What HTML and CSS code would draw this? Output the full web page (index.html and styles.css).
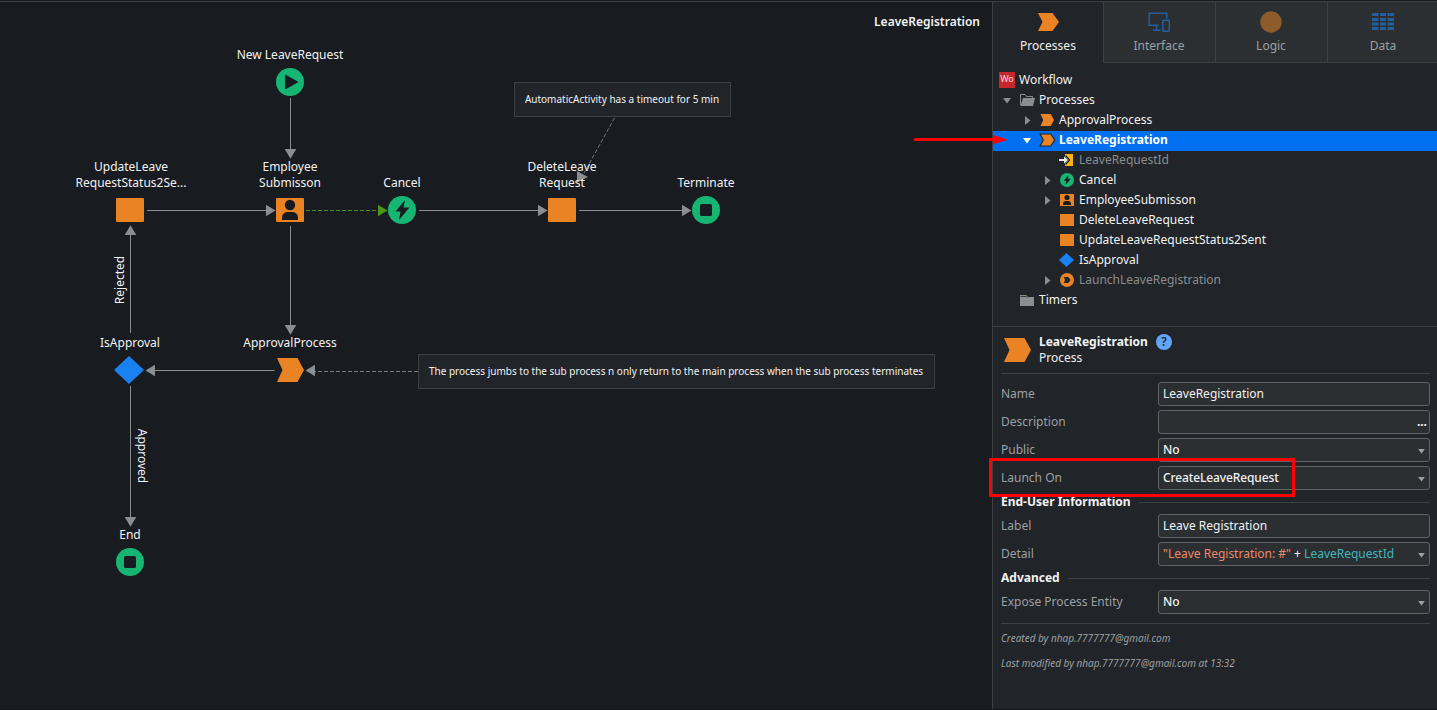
FILE: index.html
```html
<!DOCTYPE html>
<html lang="en">
<head>
<meta charset="utf-8">
<title>LeaveRegistration</title>
<link rel="stylesheet" href="styles.css">
</head>
<body>
<svg class="defs" width="0" height="0">
  <defs>
    <symbol id="start" viewBox="0 0 28 28"><circle cx="14" cy="14" r="14" fill="#16b573"/><path d="M9 7.2Q9 6.500 9.700 6.800L21.700 13.400Q22.600 14 21.700 14.600L9.700 21.200Q9 21.500 9 20.800Z" fill="#181b1f"/></symbol>
    <symbol id="stop" viewBox="0 0 28 28"><circle cx="14" cy="14" r="14" fill="#16b573"/><rect x="8" y="8" width="12" height="12" rx="1.500" fill="#181b1f"/></symbol>
    <symbol id="event" viewBox="0 0 28 28"><circle cx="14" cy="14" r="14" fill="#16b573"/><path d="M17 4L7.500 15.500H12.500L11 24L21.500 11.500H15.500Z" fill="#181b1f"/></symbol>
    <symbol id="auto" viewBox="0 0 28 28"><rect y="2" width="28" height="24" rx="1" fill="#e98324"/></symbol>
    <symbol id="human" viewBox="0 0 28 28"><rect y="2" width="28" height="24" rx="1" fill="#e98324"/><circle cx="14" cy="9" r="5.200" fill="#181b1f"/><path d="M6 24V21.500Q6.500 16 12 16H16Q21.500 16 22 21.500V24Z" fill="#181b1f"/></symbol>
    <symbol id="process" viewBox="0 0 28 28"><path d="M1 2H21.500L28 14L21.500 26H1L6.500 14Z" fill="#e98324"/></symbol>
    <symbol id="decision" viewBox="0 0 30 28"><path d="M15 0L30 14L15 28L0 14Z" fill="#1a82f0"/></symbol>
    <symbol id="launch" viewBox="0 0 28 28"><circle cx="14" cy="14" r="14" fill="#e98324"/><path d="M7.500 8H16.500L21 14L16.500 20H7.500L10 14Z" fill="#212428"/></symbol>
    <symbol id="input" viewBox="0 0 16 16"><path d="M6 2H14V14H6V11L9.500 8L6 5Z" fill="#fdb515"/><path d="M6.500 3.500L10.500 8L6.500 12.500" fill="none" stroke="#212428" stroke-width="1.300"/><path d="M0 7H5V4.500L9 8L5 11.500V9H0Z" fill="#e8eaec"/></symbol>
    <symbol id="folder-open" viewBox="0 0 15 12"><path d="M.5 11V.5H5L6.500 2.500H12.500V4" fill="none" stroke="#8b8d90"/><path d="M3 4H15L13 12H0.500Z" fill="#8b8d90"/></symbol>
    <symbol id="folder" viewBox="0 0 14 12"><path d="M0 1H6L8 3H14V12H0Z" fill="#8b8d90"/><path d="M.5 2.500H6.500L7.500 3.500" fill="none" stroke="#212428" stroke-width=".8"/></symbol>
    <symbol id="right" viewBox="0 0 6 9"><path d="M0 0L5.500 4.500L0 9Z" fill="currentColor"/></symbol>
    <symbol id="down" viewBox="0 0 8 6"><path d="M0 0H8L4 5.500Z" fill="currentColor"/></symbol>
  </defs>
</svg>

<div class="app">
  <main class="canvas">
    <h1 class="canvas-title">LeaveRegistration</h1>

    <div class="note" style="left:514px;top:80px;width:217px">AutomaticActivity has a timeout for 5 min</div>
    <div class="note" style="left:418px;top:352px;width:517px">The process jumbs to the sub process n only return to the main process when the sub process terminates</div>

    <svg class="edges" viewBox="0 2 992 708" width="992" height="708">
      <g stroke="#8b8d90" fill="none">
        <path d="M290.500 98V150M147 210.500H267M419 210.500H539M579 210.500H683M290.500 226V326M274.500 370.500H154M130.500 333V234M130.500 386V518"/>
        <path d="M418 371.500H314M614.500 118L584 173" stroke-dasharray="4 2" stroke="#77797c"/>
        <path d="M306 210.500H379" stroke="#4a9418" stroke-dasharray="4 2"/>
      </g>
      <g fill="#8b8d90">
        <path d="M284.700 149H296.300L290.500 158.700Z"/>
        <path d="M266 204.700V216.300L275.500 210.500Z"/>
        <path d="M538 204.700V216.300L547.500 210.500Z"/>
        <path d="M682 204.700V216.300L691.500 210.500Z"/>
        <path d="M284.700 325H296.300L290.500 334.700Z"/>
        <path d="M155 364.700V376.300L145.500 370.500Z"/>
        <path d="M315 364.700V376.300L305.500 370.500Z"/>
        <path d="M124.700 235H136.300L130.500 225.300Z"/>
        <path d="M124.700 517H136.300L130.500 526.700Z"/>
        <path d="M577 171V182.500L588 177Z"/>
        <path d="M378 204.700V216.300L387.500 210.500Z" fill="#4a9418"/>
      </g>
    </svg>

    <div class="node" style="left:290px;top:80px"><span>New LeaveRequest</span><svg><use href="#start"/></svg></div>
    <div class="node" style="left:130px;top:208px"><span class="truncated">UpdateLeave<br>RequestStatus2Se...</span><svg><use href="#auto"/></svg></div>
    <div class="node" style="left:290px;top:208px"><span>Employee<br>Submisson</span><svg><use href="#human"/></svg></div>
    <div class="node" style="left:402px;top:208px"><span>Cancel</span><svg><use href="#event"/></svg></div>
    <div class="node" style="left:562px;top:208px"><span>DeleteLeave<br>Request</span><svg><use href="#auto"/></svg></div>
    <div class="node" style="left:706px;top:208px"><span>Terminate</span><svg><use href="#stop"/></svg></div>
    <div class="node" style="left:130px;top:368px"><span>IsApproval</span><svg class="decision"><use href="#decision"/></svg></div>
    <div class="node" style="left:290px;top:368px"><span>ApprovalProcess</span><svg><use href="#process"/></svg></div>
    <div class="node" style="left:130px;top:560px"><span>End</span><svg><use href="#stop"/></svg></div>
    <span class="edge-label up" style="left:120px;top:278px">Rejected</span>
    <span class="edge-label down" style="left:142px;top:454px">Approved</span>
  </main>

  <aside class="panel">
    <nav class="tabs">
      <div class="tab active"><svg viewBox="0 0 22 22"><path d="M1 2H15.500L22 11L15.500 20H1L5.500 11Z" fill="#e98324"/></svg>Processes</div>
      <div class="tab"><svg viewBox="0 0 22 22" fill="none" stroke="#235f9e" stroke-width="1.500"><path d="M11 14.300H1.200V2.200H18.800V7.500M8.500 14.500V19M5 19.200H12.500"/><rect x="14.800" y="9.300" width="6.500" height="11" rx="1"/></svg>Interface</div>
      <div class="tab"><svg viewBox="0 0 22 22"><circle cx="11" cy="11" r="10.700" fill="#8e5b2b"/></svg>Logic</div>
      <div class="tab"><svg viewBox="0 0 22 22" stroke="#235f9e" stroke-width="3"><path d="M0 3.500H6.500M8 3.500H14M15.500 3.500H22M0 8.500H6.500M8 8.500H14M15.500 8.500H22M0 13H6.500M8 13H14M15.500 13H22M0 17.500H6.500M8 17.500H14M15.500 17.500H22"/></svg>Data</div>
    </nav>

    <div class="tree">
      <div class="row root"><i class="logo">Wo</i><span>Workflow</span></div>
      <div class="row l1"><svg class="caret-d"><use href="#down"/></svg><svg class="ico"><use href="#folder-open" x="0" y="1" width="15" height="12"/></svg><span>Processes</span></div>
      <div class="row l2"><svg class="caret-r"><use href="#right"/></svg><svg class="ico"><use href="#process" y="0" width="14" height="14"/></svg><span>ApprovalProcess</span></div>
      <div class="row l2 selected"><svg class="caret-d"><use href="#down"/></svg><svg class="ico"><path d="M.2 1H10.800L14.700 7L10.800 13H.2L3.200 7Z" fill="#e98324" stroke="#212428" stroke-width="1.200"/></svg><span>LeaveRegistration</span></div>
      <div class="row l3 muted"><i class="caret-none"></i><svg class="ico in"><use href="#input" width="16" height="16"/></svg><span>LeaveRequestId</span></div>
      <div class="row l3"><svg class="caret-r"><use href="#right"/></svg><svg class="ico"><use href="#event" width="14" height="14"/></svg><span>Cancel</span></div>
      <div class="row l3"><svg class="caret-r"><use href="#right"/></svg><svg class="ico"><use href="#human" width="14" height="14"/></svg><span>EmployeeSubmisson</span></div>
      <div class="row l3"><i class="caret-none"></i><svg class="ico"><use href="#auto" width="14" height="14"/></svg><span>DeleteLeaveRequest</span></div>
      <div class="row l3"><i class="caret-none"></i><svg class="ico"><use href="#auto" width="14" height="14"/></svg><span>UpdateLeaveRequestStatus2Sent</span></div>
      <div class="row l3"><i class="caret-none"></i><svg class="ico"><use href="#decision" x="-1" width="15" height="14"/></svg><span>IsApproval</span></div>
      <div class="row l3 muted"><svg class="caret-r"><use href="#right"/></svg><svg class="ico"><use href="#launch" width="14" height="14"/></svg><span>LaunchLeaveRegistration</span></div>
      <div class="row l1"><i class="caret-none"></i><svg class="ico"><use href="#folder" y="1" width="14" height="12"/></svg><span>Timers</span></div>
    </div>

    <section class="props">
      <header class="props-head">
        <svg class="props-icon"><use href="#process"/></svg>
        <div><b>LeaveRegistration</b><br>Process</div>
        <i class="help">?</i>
      </header>
      <div class="form">
        <div class="field"><label>Name</label><div class="input">LeaveRegistration</div></div>
        <div class="field"><label>Description</label><div class="input"><b class="dots">...</b></div></div>
        <div class="field"><label>Public</label><div class="input strong">No<svg class="arrow"><use href="#down"/></svg></div></div>
        <div class="field"><label>Launch On</label><div class="input strong">CreateLeaveRequest<svg class="arrow"><use href="#down"/></svg></div></div>
        <h2 class="group">End-User Information</h2>
        <div class="field"><label>Label</label><div class="input">Leave Registration</div></div>
        <div class="field"><label>Detail</label><div class="input"><span class="str">"Leave Registration: #"</span>&nbsp;+&nbsp;<span class="var">LeaveRequestId</span><svg class="arrow"><use href="#down"/></svg></div></div>
        <h2 class="group">Advanced</h2>
        <div class="field"><label>Expose Process Entity</label><div class="input strong">No<svg class="arrow"><use href="#down"/></svg></div></div>
      </div>
      <footer class="meta"><p>Created by nhap.7777777@gmail.com</p><p>Last modified by nhap.7777777@gmail.com at 13:32</p></footer>
    </section>
  </aside>

  <svg class="pointer" width="96" height="10" viewBox="0 0 96 10"><path d="M2 4.500H82" stroke="#f00" stroke-width="3" stroke-linecap="round"/><path d="M80 0L95 4.700L80 9.300Z" fill="#f00"/></svg>
  <div class="highlight"></div>
</div>
</body>
</html>
```
FILE: styles.css
```css
* { box-sizing: border-box; }
body {
  margin: 0;
  background: #181b1f;
  color: #f1f2f3;
  font: 12px/16px "Noto Sans", sans-serif;
}
.defs { position: absolute; }
.app {
  position: relative;
  display: flex;
  width: 1437px;
  height: 709px;
  margin-top: 1px;
  padding-top: 0;
  border-top: 1px solid #3b3e41;
  border-bottom: 1px solid #141619;
  overflow: hidden;
}
.app i { font-style: normal; }

/* Flow canvas */
.canvas { position: relative; flex: 1; }
.canvas-title {
  margin: 0;
  padding: 12px 12px 0 0;
  text-align: right;
  font-size: 12px;
  line-height: 16px;
  font-weight: 600;
}
.edges { position: absolute; left: 0; top: 0; }
.node {
  position: absolute;
  width: 140px;
  height: 28px;
  margin: -14px 0 0 -70px;
  display: flex;
  flex-direction: column;
  align-items: center;
  justify-content: flex-end;
  gap: 5px;
  text-align: center;
}
.node svg { flex: none; width: 28px; height: 28px; }
.node .decision { width: 30px; margin-left: -2px; }
.node .truncated { padding-left: 2px; }
.note {
  position: absolute;
  height: 35px;
  padding: 8px 1px 8px 0;
  border: 1px solid #3e4144;
  background: #212428;
  font-size: 10px;
  line-height: 17px;
  text-align: center;
  white-space: nowrap;
}
.edge-label { position: absolute; line-height: 16px; }
.up { transform: translate(-50%, -50%) rotate(-90deg); }
.down { transform: translate(-50%, -50%) rotate(90deg); }

/* Side panel */
.panel {
  width: 445px;
  display: flex;
  flex-direction: column;
  background: #212428;
  border-left: 1px solid #3e4144;
}
.tabs { display: flex; height: 61px; }
.tab {
  flex: none;
  width: 112px;
  display: flex;
  flex-direction: column;
  align-items: center;
  gap: 5px;
  padding: 9px 1px 0 0;
  border-left: 1px solid #3e4144;
  border-bottom: 1px solid #3e4144;
  background: #2b2f32;
  color: #9da0a3;
}
.tab svg { width: 22px; height: 22px; }
.tab.active { width: 110px; padding-right: 0; border: 0; background: none; color: #f1f2f3; }

.tree { height: 263px; padding-top: 8px; }
.row { display: flex; align-items: center; height: 20px; }
.row span { position: relative; top: -1px; white-space: nowrap; }
.row .ico { flex: none; width: 16px; height: 14px; margin: 0 3px 2px 0; overflow: visible; }
.row .ico.in { height: 16px; margin: 0 4px 2px -1px; }
.row.root { padding-left: 6px; gap: 4px; }
.logo {
  width: 16px;
  height: 16px;
  margin-bottom: 2px;
  background: #c7262d;
  color: #f5d6d7;
  font-size: 9px;
  line-height: 14px;
  text-align: center;
}
.l1 { padding-left: 10px; }
.l2 { padding-left: 30px; }
.l3 { padding-left: 50px; }
.caret-d, .caret-r, .caret-none { flex: none; color: #8b8d90; }
.caret-none { width: 17px; }
.caret-d { width: 8px; height: 6px; margin-right: 9px; }
.caret-r { width: 6px; height: 9px; margin: 0 9px 1px 2px; }
.selected { background: #0070f0; color: #fff; font-weight: 700; }
.selected .caret-d { color: #fff; }
.muted { color: #8b8d90; }

/* Properties */
.props { flex: 1; border-top: 1px solid #3e4144; padding: 0 7px 0 8px; }
.props-head {
  display: flex;
  height: 47px;
  padding-top: 7px;
  border-bottom: 1px solid #3e4144;
}
.props-icon { width: 28px; height: 28px; margin: 2px 8px 0 2px; }
.help {
  width: 16px;
  height: 16px;
  margin-left: 8px;
  border-radius: 50%;
  background: #62a5f6;
  color: #212428;
  text-align: center;
  line-height: 15px;
  font-weight: 600;
}
.form {
  display: flex;
  flex-direction: column;
  gap: 4px;
  padding: 8px 0 9px;
  border-bottom: 1px solid #3e4144;
}
.field { display: grid; grid-template-columns: 157px 1fr; height: 24px; }
.field label { color: #9da0a3; line-height: 23px; }
.input {
  display: flex;
  align-items: center;
  border: 1px solid #606366;
  border-radius: 3px;
  background: #2b2f32;
  padding: 0 4px 1px;
  white-space: pre;
}
.strong { font-weight: 500; letter-spacing: -.12px; }
.dots { margin-left: auto; margin-right: -2px; }
.arrow { width: 7px; height: 5px; margin: 3px 0 0 auto; color: #9da0a3; }
.str { color: #ee8866; }
.var { color: #42b5bd; }
.group {
  display: flex;
  align-items: center;
  gap: 8px;
  height: 16px;
  margin: 0;
  font-size: 12px;
  font-weight: 700;
}
.group::after { content: ""; flex: 1; height: 1px; background: #3e4144; }
.meta { padding-top: 6px; color: #9da0a3; font-size: 10px; font-style: italic; }
.meta p { margin: 0 0 9px; }

/* Annotations drawn over the window */
.pointer { position: absolute; left: 913px; top: 133px; }
.highlight {
  position: absolute;
  left: 989px;
  top: 456px;
  width: 306px;
  height: 39px;
  border: 3px solid #f00;
}
```
